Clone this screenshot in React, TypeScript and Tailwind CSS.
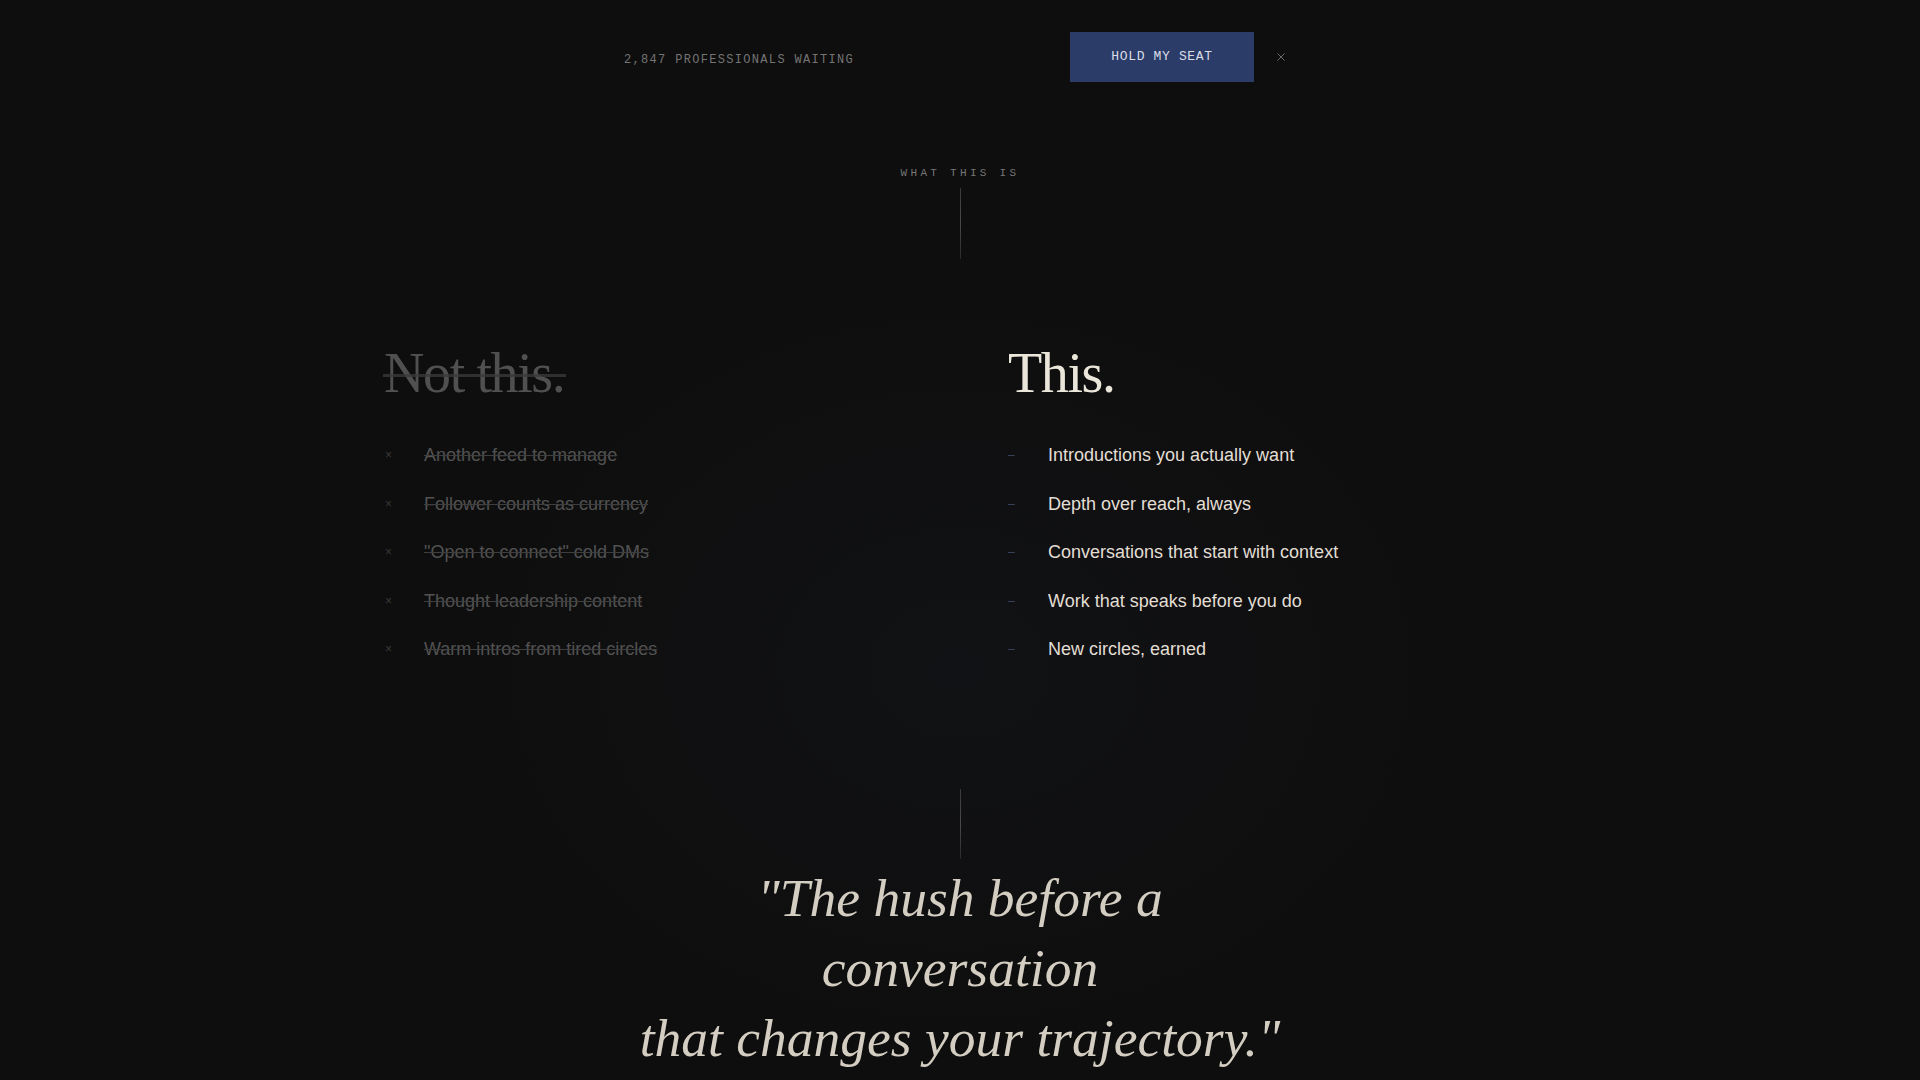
import React from "react";

const notThis = [
  "Another feed to manage",
  "Follower counts as currency",
  "\"Open to connect\" cold DMs",
  "Thought leadership content",
  "Warm intros from tired circles",
];

const yesThis = [
  "Introductions you actually want",
  "Depth over reach, always",
  "Conversations that start with context",
  "Work that speaks before you do",
  "New circles, earned",
];

const mono = "font-['Liberation_Mono',monospace]";
const serif = "font-['Liberation_Serif',serif]";
const sans = "font-['Liberation_Sans',Arial,sans-serif]";

function TopBar() {
  return (
    <div className="pt-8">
      <div className="mx-auto flex w-[672px] items-center justify-between">
        <span
          className={`${mono} mt-[5px] text-[12px] leading-4 tracking-[0.11em] text-[#747474]`}
        >
          2,847 PROFESSIONALS WAITING
        </span>
        <div className="flex items-center gap-3">
          <button
            className={`${mono} h-[50px] w-[184px] bg-[#2b3c69] text-[13px] tracking-[0.05em] text-[#dcdde6]`}
          >
            HOLD MY SEAT
          </button>
          <button className="flex h-[30px] w-[30px] items-center justify-center text-[#6a6a6a]">
            <svg width="8" height="8" viewBox="0 0 8 8" fill="none">
              <path d="M0.5 0.5L7.5 7.5M7.5 0.5L0.5 7.5" stroke="currentColor" strokeWidth="1" />
            </svg>
          </button>
        </div>
      </div>
    </div>
  );
}

function Divider({ className = "" }: { className?: string }) {
  return (
    <div
      className={`mx-auto w-px bg-gradient-to-b from-[#3a3a3a] via-[#4a4a4a] to-[#2a2a2a] ${className}`}
    />
  );
}

export default function App() {
  return (
    <div className="relative min-h-screen overflow-hidden bg-[#0e0e0e]">
      <div className="pointer-events-none absolute inset-0 bg-[radial-gradient(ellipse_26%_36%_at_50%_62%,rgba(24,26,34,0.35),transparent)]" />
      <div className="relative">
        <TopBar />

        <section className="pt-[83px]">
          <p
            className={`${mono} text-center text-[11px] leading-4 tracking-[0.3em] text-[#767676]`}
          >
            WHAT THIS IS
          </p>
          <Divider className="mt-[7px] h-[71px]" />

          <div className="mx-auto mt-[86px] grid max-w-6xl grid-cols-2 gap-24">
            <div>
              <h2
                className={`${serif} relative inline-block text-[56px] leading-none tracking-tight text-[#505050]`}
              >
                Not this.
                <span className="absolute -left-px -right-[2px] top-[29px] h-[3px] bg-[#3a3a3a]/80" />
              </h2>
              <ul className="mt-10 flex flex-col gap-5">
                {notThis.map((item) => (
                  <li key={item} className={`${sans} flex items-center text-[18px] leading-[28.5px]`}>
                    <span className="w-10 shrink-0 pl-[1px] text-[12px] leading-none text-[#3a3a3a]">
                      ×
                    </span>
                    <span className="text-[#525252] line-through decoration-[#3e3e3e]">{item}</span>
                  </li>
                ))}
              </ul>
            </div>

            <div>
              <h2 className={`${serif} text-[56px] leading-none tracking-tight text-[#ebe6da]`}>
                This.
              </h2>
              <ul className="mt-10 flex flex-col gap-5">
                {yesThis.map((item) => (
                  <li key={item} className={`${sans} flex items-center text-[18px] leading-[28.5px]`}>
                    <span className="w-10 shrink-0 text-[12px] leading-none text-[#3c4462]">–</span>
                    <span className="text-[#e2ded4]">{item}</span>
                  </li>
                ))}
              </ul>
            </div>
          </div>
        </section>

        <section className="pt-[125px]">
          <Divider className="h-[70px]" />
          <blockquote
            className={`${serif} mt-[4px] text-center text-[53.5px] italic leading-[70px] text-[#d4cec2]`}
          >
            "The hush before a
            <br />
            conversation
            <br />
            that changes your trajectory."
          </blockquote>
        </section>
      </div>
    </div>
  );
}
